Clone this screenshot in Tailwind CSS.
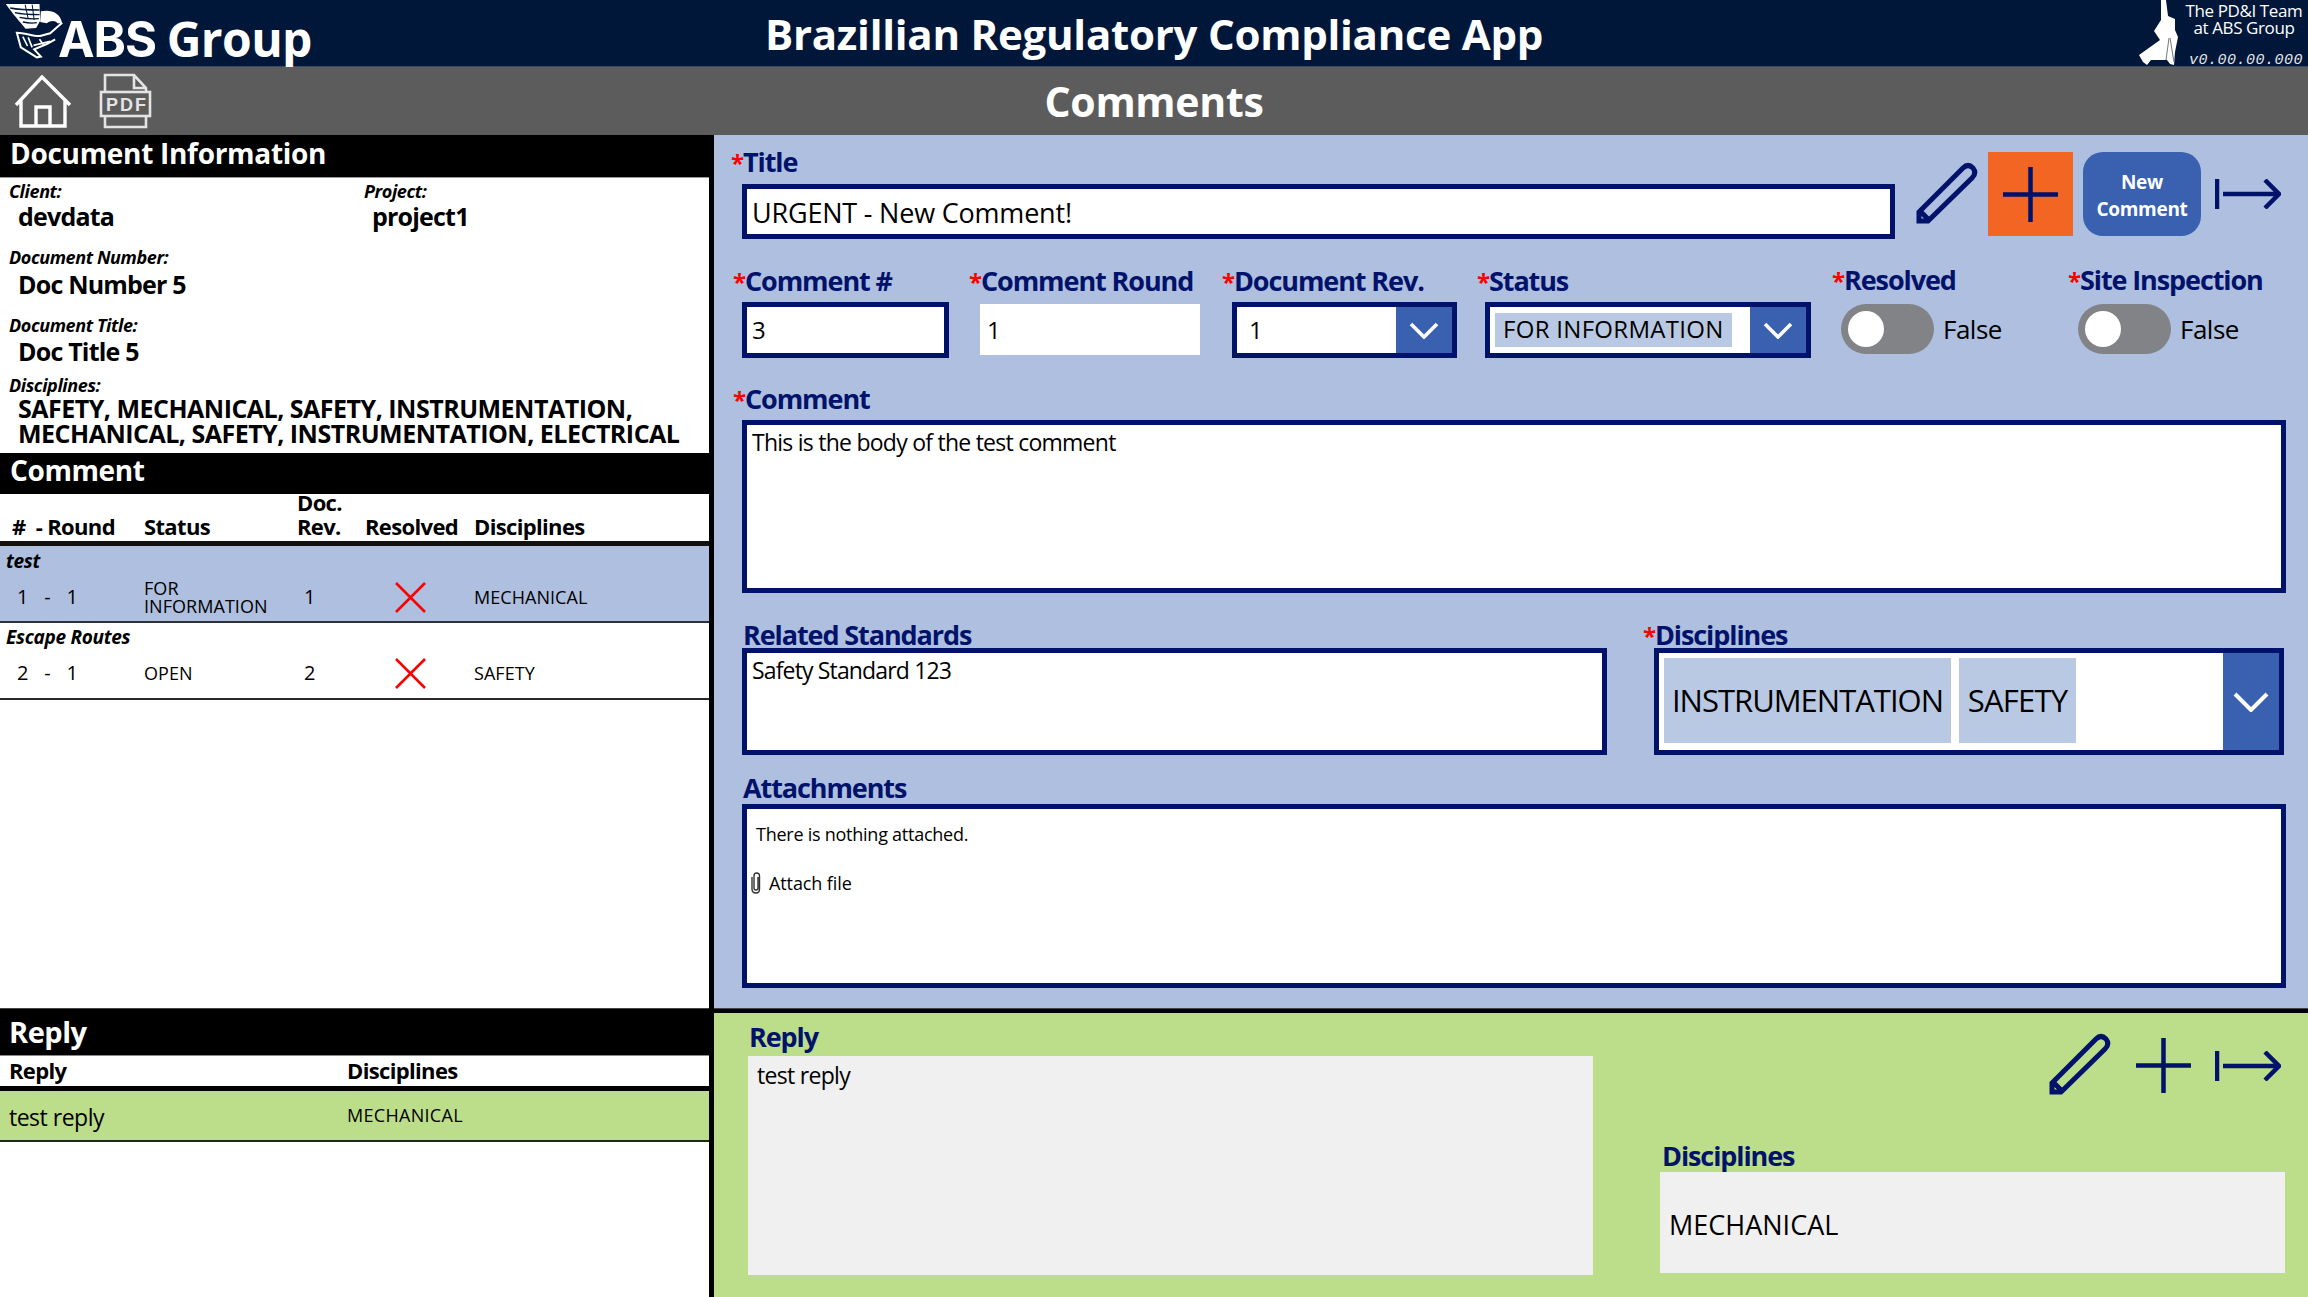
<!DOCTYPE html>
<html lang="en">
<head>
    <meta charset="UTF-8">
    <title>Brazillian Regulatory Compliance App</title>
    <script src="https://cdn.jsdelivr.net/npm/@tailwindcss/browser@4"></script>
</head>
<body class="w-[2308px] h-[1297px] overflow-hidden bg-white text-black font-['Open_Sans',sans-serif] flex flex-col">

    <!-- App header -->
    <header class="h-[67px] shrink-0 bg-[#00173a] grid grid-cols-[1fr_auto_1fr] text-white border-b border-[#3c4a5c]">
        <div class="flex items-start">
            <svg class="w-[67px] h-[60px] shrink-0" viewBox="0 0 200 180" fill="none" stroke="#fff">
                <path d="M17 12 L118 12 L120 62 L108 84 L76 86 C60 66 36 40 17 12Z" fill="#fff" stroke="none"/>
                <path d="M30 24 C60 30 90 30 118 30 M44 38 C70 44 95 44 118 44 M58 52 C80 57 100 57 116 56 M68 66 C85 70 100 70 110 68" stroke="#00173a" stroke-width="4"/>
                <path d="M75 14 L84 56 M96 14 L102 60" stroke="#00173a" stroke-width="3"/>
                <path d="M122 34 C150 28 180 36 186 70 L172 70 C165 60 150 62 140 70 L120 66Z" fill="#fff" stroke="none"/>
                <path d="M186 68 L150 100 L120 108 C100 110 75 98 50 98 L62 142 L110 172 L122 170 L102 148 L140 132 L165 118" stroke-width="6"/>
                <path d="M68 110 L82 138 M84 112 L96 142 M100 136 L150 124 M118 118 L130 134" stroke-width="5"/>
            </svg>
            <div class="ml-[-9px] mt-[9px] text-[49px] leading-[60px] font-['Inter',sans-serif] font-bold tracking-[-1px] whitespace-nowrap">ABS <span class="font-['Open_Sans',sans-serif] text-[48px] font-bold tracking-[-0.6px]">Group</span></div>
        </div>
        <h1 class="text-[42px] leading-[68px] font-bold tracking-[-0.25px] whitespace-nowrap">Brazillian Regulatory Compliance App</h1>
        <div class="flex justify-end">
            <svg class="w-[40px] h-[66px] mr-[6px]" viewBox="0 0 40 66" fill="#fff">
                <path d="M22 0 L27 0 L29 16 L36 19 L36 30 L39 37 L36 52 L35 65 L31 64 L28 60 L12 60 L8 65 L4 62 L0 55 L21 40 L15 31 L22 20Z"/>
                <path d="M31 38 L35 62 M30 38 L27 60" stroke="#777" stroke-width="1" fill="none"/>
            </svg>
            <div class="w-[118px] mr-[5px] text-center">
                <div class="text-[17px] leading-[17px] mt-[2px] tracking-[-0.4px] whitespace-nowrap">The PD&amp;I Team</div>
                <div class="text-[17px] leading-[17px] tracking-[-0.4px] whitespace-nowrap">at ABS Group</div>
                <div class="mt-[16px] text-right text-[15px] leading-[18px] italic tracking-[0.5px] font-['Liberation_Mono',monospace] text-[#e6e6e6] whitespace-nowrap">v0.00.00.000</div>
            </div>
        </div>
    </header>

    <!-- Screen title bar -->
    <div class="h-[68px] shrink-0 bg-[#5c5c5c] relative flex items-center justify-center">
        <div class="absolute left-[14px] top-[8px] flex gap-[27px] items-start">
            <svg class="w-[58px] h-[54px]" viewBox="14 76 58 54" fill="none" stroke="#fff" stroke-width="3.4">
                <path d="M16 106 L42 78 L70 106 M21 101 V127 H65 V101 M36 127 V108 H50 V127"/>
            </svg>
            <svg class="w-[53px] h-[56px] mt-[-2px]" viewBox="99 73 53 56" fill="none" stroke="#e4e4e4" stroke-width="2.6">
                <path d="M105 91 V75 H134 L146 88 V91 M134 75 V88 H146 M105 117 V127 H146 V117"/>
                <rect x="101" y="92" width="49" height="24"/>
                <text x="106" y="111" fill="#e4e4e4" stroke="none" font-family="Liberation Sans, sans-serif" font-weight="700" font-size="18" letter-spacing="2">PDF</text>
            </svg>
        </div>
        <h2 class="text-[41px] leading-[70px] text-white font-bold tracking-[-0.3px]">Comments</h2>
    </div>

    <main class="flex-1 flex min-h-0">
        <!-- Left column -->
        <div class="w-[709px] shrink-0 flex flex-col">
            <section class="h-[873px] flex flex-col">
                <div class="h-[43px] shrink-0 bg-black border-b border-[#999] text-white font-bold text-[28px] leading-[37px] px-[10px] tracking-[-0.3px]">Document Information</div>

                <div class="h-[268px] shrink-0 overflow-hidden px-[9px]">
                    <div class="grid grid-cols-[355px_1fr]">
                        <div>
                            <div class="text-[18px] leading-[22px] mt-[2px] italic font-bold tracking-[-0.4px]">Client:</div>
                            <div class="ml-[9px] text-[25px] leading-[28px] font-bold tracking-[-0.8px]">devdata</div>
                        </div>
                        <div>
                            <div class="text-[18px] leading-[22px] mt-[2px] italic font-bold tracking-[-0.4px]">Project:</div>
                            <div class="ml-[8px] text-[25px] leading-[28px] font-bold tracking-[-0.8px]">project1</div>
                        </div>
                    </div>
                    <div class="text-[18px] leading-[22px] mt-[16px] italic font-bold tracking-[-0.4px]">Document Number:</div>
                    <div class="ml-[9px] mt-[2px] text-[25px] leading-[28px] font-bold tracking-[-0.8px]">Doc Number 5</div>
                    <div class="text-[18px] leading-[22px] mt-[16px] italic font-bold tracking-[-0.4px]">Document Title:</div>
                    <div class="ml-[9px] mt-[1px] text-[25px] leading-[28px] font-bold tracking-[-0.8px]">Doc Title 5</div>
                    <div class="text-[18px] leading-[22px] mt-[9px] italic font-bold tracking-[-0.4px]">Disciplines:</div>
                    <div class="ml-[9px] text-[25px] leading-[25px] font-bold tracking-[-0.5px]">SAFETY, MECHANICAL, SAFETY, INSTRUMENTATION, MECHANICAL, SAFETY, INSTRUMENTATION, ELECTRICAL</div>
                </div>

                <div class="h-[41px] mt-[7px] shrink-0 bg-black text-white font-bold text-[28px] leading-[34px] px-[10px] tracking-[-0.4px]">Comment</div>

                <div class="h-[47px] shrink-0 pb-[3px] grid content-end grid-cols-[144px_153px_68px_109px_1fr] items-end text-[22px] leading-[24px] font-bold tracking-[-0.65px]">
                    <div class="pl-[12px] whitespace-pre">#  - Round</div>
                    <div>Status</div>
                    <div>Doc.<br>Rev.</div>
                    <div>Resolved</div>
                    <div>Disciplines</div>
                </div>
                <div class="h-[5px] shrink-0 bg-[#111]"></div>

                <!-- Comment rows -->
                <div class="h-[77px] shrink-0 bg-[#aebfdf] border-b-[2px] border-[#2a3140]">
                    <div class="pl-[6px] text-[19px] leading-[24px] pt-[3px] italic font-bold tracking-[-0.3px]">test</div>
                    <div class="grid grid-cols-[144px_153px_68px_109px_1fr] items-center h-[48px] text-[18px] leading-[18px] tracking-[0.05px]">
                        <div class="pl-[17px] text-[20px] whitespace-pre">1   -   1</div>
                        <div>FOR<br>INFORMATION</div>
                        <div class="pl-[7px] text-[20px]">1</div>
                        <div class="pl-[30px]"><svg class="w-[31px] h-[31px]" viewBox="0 0 31 31" stroke="#f00" stroke-width="2.6" fill="none"><path d="M1 1 L30 30 M30 1 L1 30"/></svg></div>
                        <div>MECHANICAL</div>
                    </div>
                </div>
                <div class="h-[77px] shrink-0 border-b-[2px] border-[#2a2a2a]">
                    <div class="pl-[6px] text-[19px] leading-[24px] pt-[2px] italic font-bold tracking-[-0.3px]">Escape Routes</div>
                    <div class="grid grid-cols-[144px_153px_68px_109px_1fr] items-center h-[48px] text-[18px] leading-[18px] tracking-[0.05px]">
                        <div class="pl-[17px] text-[20px] whitespace-pre">2   -   1</div>
                        <div>OPEN</div>
                        <div class="pl-[7px] text-[20px]">2</div>
                        <div class="pl-[30px]"><svg class="w-[31px] h-[31px]" viewBox="0 0 31 31" stroke="#f00" stroke-width="2.6" fill="none"><path d="M1 1 L30 30 M30 1 L1 30"/></svg></div>
                        <div>SAFETY</div>
                    </div>
                </div>
            </section>

            <div class="h-[5px] shrink-0 bg-black border-t border-[#444]"></div>

            <section class="flex-1 flex flex-col">
                <div class="h-[43px] shrink-0 bg-black border-b border-[#888] text-white font-bold text-[29px] leading-[38px] px-[9px] tracking-[-0.5px]">Reply</div>
                <div class="h-[30px] shrink-0 grid grid-cols-[347px_1fr] text-[22px] leading-[28px] font-bold tracking-[-0.65px]">
                    <div class="pl-[9px]">Reply</div>
                    <div>Disciplines</div>
                </div>
                <div class="h-[5px] shrink-0 bg-black"></div>
                <div class="h-[51px] shrink-0 bg-[#bcdd8a] border-b-[2px] border-[#1d2a10] grid grid-cols-[347px_1fr] items-center">
                    <div class="pl-[9px] text-[23px] tracking-[-0.5px] mt-[3px]">test reply</div>
                    <div class="text-[18px] tracking-[0.3px]">MECHANICAL</div>
                </div>
            </section>
        </div>

        <div class="w-[5px] shrink-0 bg-black"></div>

        <!-- Right column -->
        <div class="flex-1 flex flex-col">
            <section class="h-[873px] shrink-0 bg-[#aebfdf] pt-[17px] pl-[28px] text-[#00126a]">
                <div class="flex h-[87px]">
                    <div class="w-[1153px]">
                        <div class="h-[32px] text-[27px] leading-[20px] font-bold tracking-[-1.1px]"><span class="text-[#f00] text-[24px] -ml-[11px]">*</span>Title</div>
                        <div class="h-[55px] border-[5px] border-[#00126a] bg-white text-black text-[27px] leading-[47px] pl-[5px] tracking-[-0.2px]">URGENT - New Comment!</div>
                    </div>
                    <svg class="w-[62px] h-[62px] ml-[21px] mt-[10px] shrink-0" viewBox="0 0 62 62" fill="none" stroke="#00126a" stroke-width="5">
                        <path d="M3 59 V50 L47 6 Q52 1 57 6 Q61 11 56 16 L12 59Z M4 49 L13 58"/>
                    </svg>
                    <div class="w-[85px] h-[84px] ml-[10px] shrink-0 bg-[#f26522] flex items-center justify-center">
                        <svg class="w-[55px] h-[55px]" viewBox="0 0 55 55" stroke="#00126a" stroke-width="4.5"><path d="M0 27.5 H55 M27.5 0 V55"/></svg>
                    </div>
                    <div class="w-[118px] h-[84px] ml-[10px] shrink-0 rounded-[20px] bg-[#3a60b0] text-white text-center font-bold text-[19px] leading-[27px] pt-[17px] tracking-[-0.3px]">New<br>Comment</div>
                    <svg class="w-[66px] h-[30px] ml-[14px] mt-[27px] shrink-0" viewBox="0 0 66 30" fill="none" stroke="#00126a" stroke-width="4.5">
                        <path d="M2 0 V30 M8 15 H64 M50 1 L64 15 L50 29"/>
                    </svg>
                </div>

                <div class="flex h-[90px] mt-[29px]">
                    <div class="w-[207px]">
                        <div class="h-[34px] text-[27px] leading-[25px] font-bold tracking-[-1.1px] whitespace-nowrap"><span class="text-[#f00] text-[24px] -ml-[9px]">*</span>Comment #</div>
                        <div class="h-[56px] border-[5px] border-[#00126a] bg-white text-black text-[24px] leading-[46px] pl-[5px]">3</div>
                    </div>
                    <div class="w-[220px] ml-[31px]">
                        <div class="h-[36px] text-[27px] leading-[25px] font-bold tracking-[-1.1px] whitespace-nowrap"><span class="text-[#f00] text-[24px] -ml-[11px]">*</span>Comment Round</div>
                        <div class="h-[51px] bg-white text-black text-[24px] leading-[51px] pl-[7px]">1</div>
                    </div>
                    <div class="w-[225px] ml-[32px]">
                        <div class="h-[34px] text-[27px] leading-[25px] font-bold tracking-[-1.1px] whitespace-nowrap"><span class="text-[#f00] text-[24px] -ml-[10px]">*</span>Document Rev.</div>
                        <div class="h-[56px] border-[5px] border-[#00126a] bg-white text-black flex">
                            <div class="flex-1 text-[24px] leading-[46px] pl-[12px]">1</div>
                            <div class="w-[56px] bg-[#3a60b0] flex items-center justify-center">
                                <svg class="w-[30px] h-[17px]" viewBox="0 0 30 17" fill="none" stroke="#fff" stroke-width="3.6"><path d="M2 2 L15 15 L28 2"/></svg>
                            </div>
                        </div>
                    </div>
                    <div class="w-[326px] ml-[28px]">
                        <div class="h-[34px] text-[27px] leading-[25px] font-bold tracking-[-1.1px] whitespace-nowrap"><span class="text-[#f00] text-[24px] -ml-[8px]">*</span>Status</div>
                        <div class="h-[56px] border-[5px] border-[#00126a] bg-white text-black flex">
                            <div class="flex-1 flex items-center pl-[5px]">
                                <div class="w-[237px] h-[34px] bg-[#b9c9e3] text-[24px] leading-[32px] pl-[8px] tracking-[0.3px] whitespace-nowrap">FOR INFORMATION</div>
                            </div>
                            <div class="w-[56px] bg-[#3a60b0] flex items-center justify-center">
                                <svg class="w-[30px] h-[17px]" viewBox="0 0 30 17" fill="none" stroke="#fff" stroke-width="3.6"><path d="M2 2 L15 15 L28 2"/></svg>
                            </div>
                        </div>
                    </div>
                    <div class="w-[237px] ml-[30px]">
                        <div class="h-[36px] text-[27px] leading-[24px] font-bold tracking-[-1.1px] whitespace-nowrap -ml-[9px]"><span class="text-[#f00] text-[24px]">*</span>Resolved</div>
                        <div class="flex items-center h-[50px]">
                            <div class="w-[93px] h-[50px] rounded-full bg-[#828386] flex items-center pl-[7px]"><div class="w-[36px] h-[36px] rounded-full bg-white"></div></div>
                            <div class="ml-[9px] text-black text-[26px] tracking-[-0.5px]">False</div>
                        </div>
                    </div>
                    <div class="w-[220px]">
                        <div class="h-[36px] text-[27px] leading-[24px] font-bold tracking-[-1.1px] whitespace-nowrap -ml-[10px]"><span class="text-[#f00] text-[24px]">*</span>Site Inspection</div>
                        <div class="flex items-center h-[50px]">
                            <div class="w-[93px] h-[50px] rounded-full bg-[#828386] flex items-center pl-[7px]"><div class="w-[36px] h-[36px] rounded-full bg-white"></div></div>
                            <div class="ml-[9px] text-black text-[26px] tracking-[-0.5px]">False</div>
                        </div>
                    </div>
                </div>

                <div class="mt-[30px] w-[1544px]">
                    <div class="h-[32px] text-[27px] leading-[22px] font-bold tracking-[-1.1px]"><span class="text-[#f00] text-[24px] -ml-[9px]">*</span>Comment</div>
                    <div class="h-[173px] border-[5px] border-[#00126a] bg-white text-black text-[23px] leading-[30px] pl-[5px] pt-[2px] tracking-[-0.75px]">This is the body of the test comment</div>
                </div>

                <div class="flex mt-[27px] w-[1544px]">
                    <div class="w-[865px]">
                        <div class="h-[28px] text-[27px] leading-[30px] font-bold tracking-[-1.1px] pl-[1px]">Related Standards</div>
                        <div class="h-[107px] border-[5px] border-[#00126a] bg-white text-black text-[23px] leading-[30px] pl-[5px] pt-[2px] tracking-[-0.85px]">Safety Standard 123</div>
                    </div>
                    <div class="w-[630px] ml-[47px]">
                        <div class="h-[28px] text-[27px] leading-[30px] font-bold tracking-[-1.1px] -ml-[11px] whitespace-nowrap"><span class="text-[#f00] text-[24px]">*</span>Disciplines</div>
                        <div class="h-[107px] border-[5px] border-[#00126a] bg-white text-black flex">
                            <div class="flex-1 flex items-start gap-[8px] pt-[5px] pl-[5px]">
                                <div class="w-[287px] h-[85px] bg-[#b9c9e3] text-[31px] leading-[85px] text-center tracking-[-1px]">INSTRUMENTATION</div>
                                <div class="w-[117px] h-[85px] bg-[#b9c9e3] text-[31px] leading-[85px] text-center tracking-[-0.8px]">SAFETY</div>
                            </div>
                            <div class="w-[56px] bg-[#3a60b0] flex items-center justify-center">
                                <svg class="w-[36px] h-[20px]" viewBox="0 0 36 20" fill="none" stroke="#fff" stroke-width="4"><path d="M2 2 L18 18 L34 2"/></svg>
                            </div>
                        </div>
                    </div>
                </div>

                <div class="mt-[20px] w-[1544px]">
                    <div class="h-[29px] text-[27px] leading-[25px] font-bold tracking-[-1.1px] pl-[1px]">Attachments</div>
                    <div class="h-[184px] border-[5px] border-[#00126a] bg-white text-black pl-[9px] pt-[12px]">
                        <div class="text-[18px] leading-[26px] tracking-[-0.25px]">There is nothing attached.</div>
                        <div class="flex items-center mt-[23px] text-[18px] leading-[26px] tracking-[-0.1px] -ml-[5px]">
                            <svg class="w-[10px] h-[22px] mr-[8px]" viewBox="0 0 10 22" fill="none" stroke="#333" stroke-width="1.4"><path d="M7 5 V16 Q7 18 5 18 Q3 18 3 16 V4 Q3 1 5.5 1 Q8.5 1 8.5 4 V17 Q8.5 21 5 21 Q1 21 1 17 V5"/></svg>
                            Attach file
                        </div>
                    </div>
                </div>
            </section>

            <div class="h-[5px] shrink-0 bg-black border-t border-[#444]"></div>

            <section class="flex-1 bg-[#bcdd8a] text-[#00126a] flex pl-[34px]">
                <div class="w-[845px]">
                    <div class="h-[43px] text-[27px] leading-[48px] font-bold tracking-[-1.1px] pl-[1px]">Reply</div>
                    <div class="h-[219px] bg-[#f0f0f0] text-black text-[23px] leading-[30px] pl-[9px] pt-[4px] tracking-[-0.7px]">test reply</div>
                </div>
                <div class="w-[625px] ml-[67px] flex flex-col">
                    <div class="h-[125px] flex justify-end pt-[20px]">
                        <svg class="w-[62px] h-[62px] mr-[25px]" viewBox="0 0 62 62" fill="none" stroke="#00126a" stroke-width="5">
                            <path d="M3 59 V50 L47 6 Q52 1 57 6 Q61 11 56 16 L12 59Z M4 49 L13 58"/>
                        </svg>
                        <svg class="w-[55px] h-[55px] mt-[5px]" viewBox="0 0 55 55" stroke="#00126a" stroke-width="4.5"><path d="M0 27.5 H55 M27.5 0 V55"/></svg>
                        <svg class="w-[66px] h-[30px] ml-[24px] mt-[18px] mr-[4px]" viewBox="0 0 66 30" fill="none" stroke="#00126a" stroke-width="4.5">
                            <path d="M2 0 V30 M8 15 H64 M50 1 L64 15 L50 29"/>
                        </svg>
                    </div>
                    <div class="h-[34px] text-[27px] leading-[36px] font-bold tracking-[-1.1px] pl-[2px]">Disciplines</div>
                    <div class="h-[101px] bg-[#f0f0f0] text-black text-[27px] leading-[105px] pl-[9px] tracking-[0px]">MECHANICAL</div>
                </div>
            </section>
        </div>
    </main>
</body>
</html>
